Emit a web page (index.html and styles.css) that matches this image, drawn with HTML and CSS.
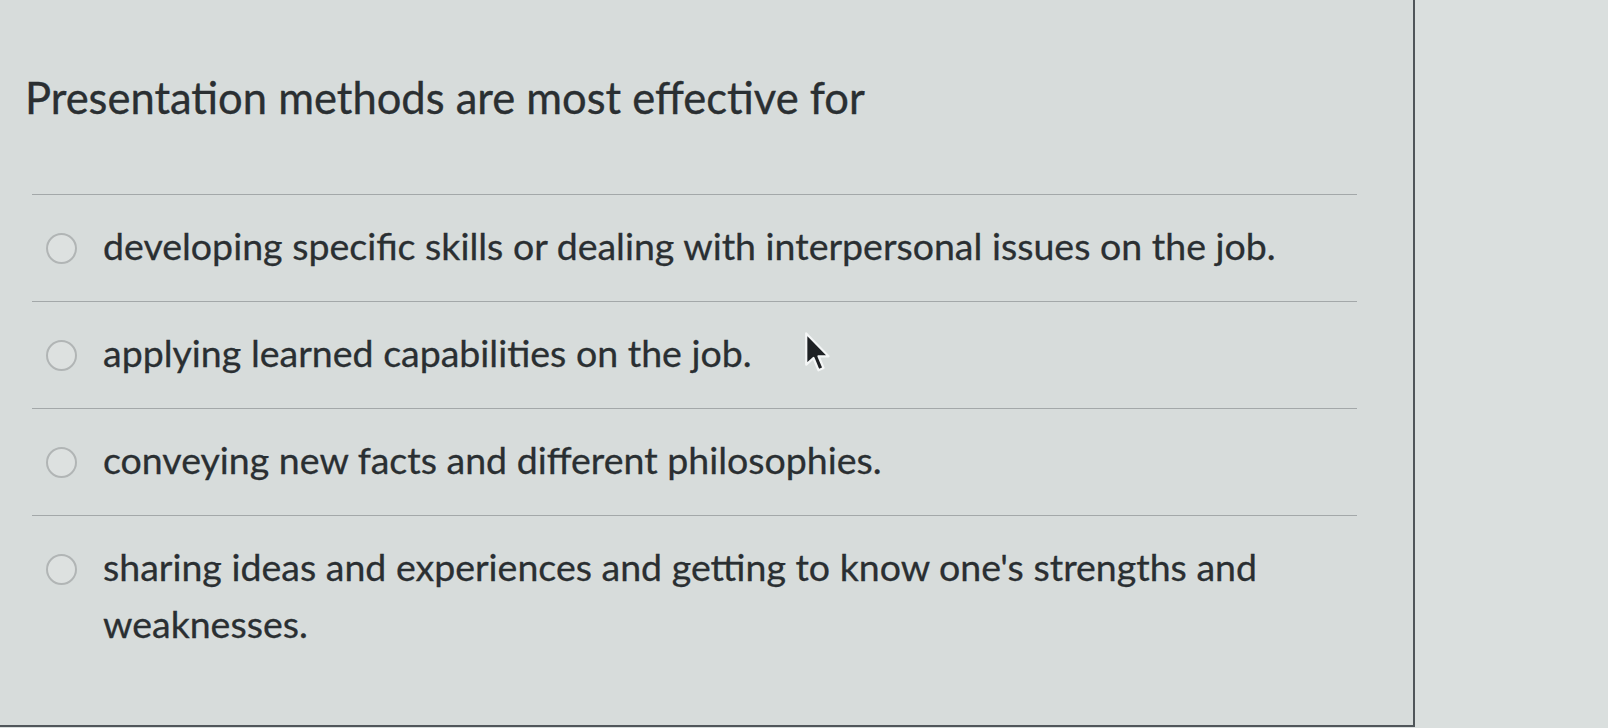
FILE: index.html
```html
<!DOCTYPE html>
<html lang="en">
<head>
<meta charset="utf-8">
<title>Quiz question</title>
<link rel="stylesheet" href="styles.css">
</head>
<body>
<div class="screen">
  <main class="panel">
    <h1 class="question">Presentation methods are most effective for</h1>
    <ul class="answers">
      <li class="answer"><span class="radio"></span><span class="label">developing specific skills or dealing with interpersonal issues on the job.</span></li>
      <li class="answer"><span class="radio"></span><span class="label">applying learned capabilities on the job.</span></li>
      <li class="answer"><span class="radio"></span><span class="label">conveying new facts and different philosophies.</span></li>
      <li class="answer"><span class="radio"></span><span class="label">sharing ideas and experiences and getting to know one's strengths and weaknesses.</span></li>
    </ul>
  </main>
  <aside class="side"></aside>
  <svg class="cursor" width="29" height="45" viewBox="0 0 26 40" aria-hidden="true">
    <path d="M2 2 L2 30 L8.5 24 L13 35 L17.5 33 L13 22.5 L22 22.5 Z" fill="#1e2124" stroke="#f4f6f6" stroke-width="2" stroke-linejoin="round"/>
  </svg>
</div>
</body>
</html>
```

FILE: styles.css
```css
html, body {
  margin: 0;
  padding: 0;
}

body {
  width: 1608px;
  height: 728px;
  overflow: hidden;
  background: #d8dddc;
  font-family: Lato, "Open Sans", "Liberation Sans", sans-serif;
  color: #2a2f32;
}

.screen {
  position: relative;
  display: flex;
  width: 1608px;
  height: 728px;
}

.panel {
  box-sizing: border-box;
  width: 1415px;
  height: 727px;
  padding: 71px 0 0 25px;
  border-right: 2px solid #50565a;
  border-bottom: 2px solid #50565a;
  background: #d7dcdb;
}

.side {
  flex: 1;
  background: #dadfde;
}

.question {
  margin: 0 0 71px 0;
  font-size: 43.5px;
  font-weight: 400;
  line-height: 52px;
  color: #2a2f32;
  -webkit-text-stroke: 0.35px #2a2f32;
}

.answers {
  list-style: none;
  margin: 0 0 0 7px;
  padding: 0;
  width: 1325px;
}

.answer {
  display: flex;
  align-items: flex-start;
  gap: 26px;
  padding: 22px 0 27px 14px;
  border-top: 1px solid #a3a8a9;
  font-size: 37.5px;
  line-height: 57px;
}

.radio {
  flex: none;
  box-sizing: border-box;
  width: 31px;
  height: 31px;
  margin-top: 16px;
  border: 2px solid #b1b5b5;
  border-radius: 50%;
  background: #dde1e0;
}

.label {
  flex: 1;
  -webkit-text-stroke: 0.3px #2a2f32;
}

.cursor {
  position: absolute;
  left: 804px;
  top: 331px;
}
```
